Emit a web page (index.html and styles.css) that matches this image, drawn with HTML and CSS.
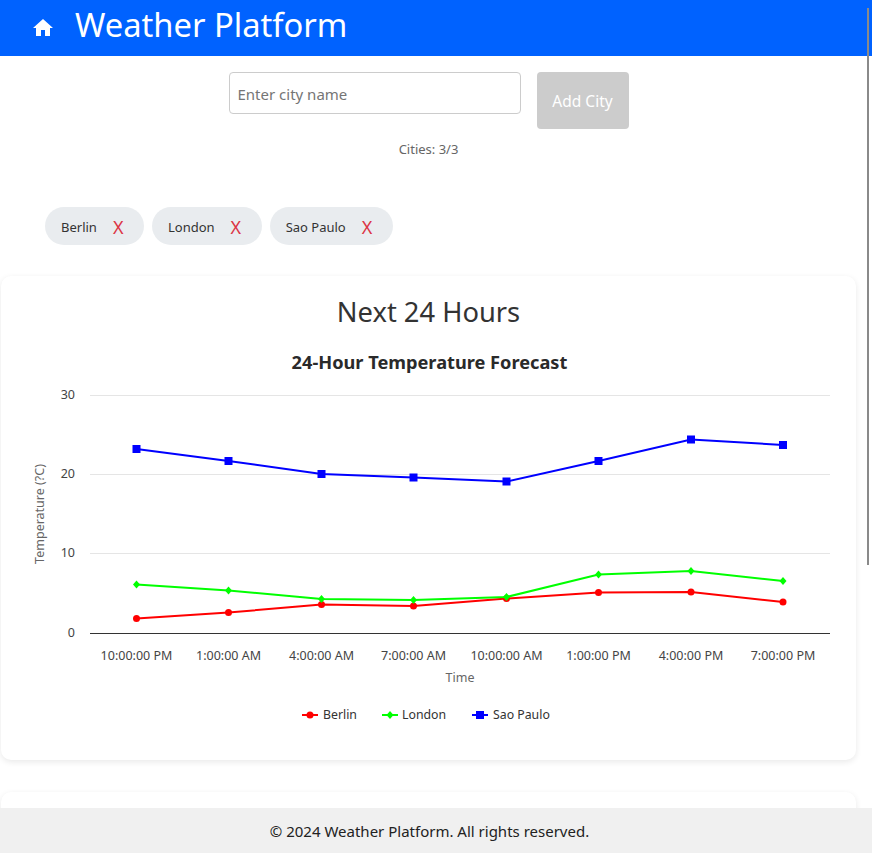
FILE: index.html
```html
<!DOCTYPE html>
<html lang="en">
<head>
  <meta charset="UTF-8" />
  <meta name="viewport" content="width=device-width, initial-scale=1.0" />
  <title>Weather Platform</title>
  <link rel="stylesheet" href="styles.css">
</head>
<body>
<header class="topbar">
  <svg class="home-icon" viewBox="0 0 24 24" aria-hidden="true"><path d="M10 20v-6h4v6h5v-8h3L12 3 2 12h3v8z"/></svg>
  <h1>Weather Platform</h1>
</header>

<main>
  <div class="search">
    <div class="search-row">
      <input type="text" placeholder="Enter city name" />
      <button disabled>Add City</button>
    </div>
    <p class="count">Cities: 3/3</p>
  </div>

  <div class="chips">
    <div class="chip"><span>Berlin</span><button>X</button></div>
    <div class="chip"><span>London</span><button>X</button></div>
    <div class="chip"><span>Sao Paulo</span><button>X</button></div>
  </div>

  <section class="card">
    <h2>Next 24 Hours</h2>
    <svg class="chart" viewBox="0 0 855 430" width="855" height="430">
      <text class="chart-title" x="427.5" y="77" text-anchor="middle">24-Hour Temperature Forecast</text>

      <line class="grid" x1="88" y1="103.5" x2="828" y2="103.5"/>
      <line class="grid" x1="88" y1="182.5" x2="828" y2="182.5"/>
      <line class="grid" x1="88" y1="261.5" x2="828" y2="261.5"/>
      <line class="axis" x1="88" y1="341.5" x2="828" y2="341.5"/>

      <text class="tick" x="73" y="107" text-anchor="end">30</text>
      <text class="tick" x="73" y="186" text-anchor="end">20</text>
      <text class="tick" x="73" y="265" text-anchor="end">10</text>
      <text class="tick" x="73" y="345" text-anchor="end">0</text>

      <text class="axis-label" transform="translate(42 222) rotate(-90)" text-anchor="middle">Temperature (?C)</text>

      <g class="tick" text-anchor="middle">
        <text x="134.500" y="367.500">10:00:00 PM</text>
        <text x="226.500" y="367.500">1:00:00 AM</text>
        <text x="319.500" y="367.500">4:00:00 AM</text>
        <text x="411.500" y="367.500">7:00:00 AM</text>
        <text x="504.500" y="367.500">10:00:00 AM</text>
        <text x="596.500" y="367.500">1:00:00 PM</text>
        <text x="689" y="367.500">4:00:00 PM</text>
        <text x="781" y="367.500">7:00:00 PM</text>
      </g>
      <text class="axis-label" x="458" y="390" text-anchor="middle">Time</text>

      <polyline class="line red" points="134.500,326.500 226.500,320.500 319.500,312.500 411.500,314 504.500,306.500 596.500,300.500 689,300 781,310"/>
      <g class="red-dots">
        <circle cx="134.500" cy="326.500" r="3.500"/><circle cx="226.500" cy="320.500" r="3.500"/>
        <circle cx="319.500" cy="312.500" r="3.500"/><circle cx="411.500" cy="314" r="3.500"/>
        <circle cx="504.500" cy="306.500" r="3.500"/><circle cx="596.500" cy="300.500" r="3.500"/>
        <circle cx="689" cy="300" r="3.500"/><circle cx="781" cy="310" r="3.500"/>
      </g>

      <polyline class="line green" points="134.500,292.500 226.500,298.500 319.500,307 411.500,308 504.500,305 596.500,282.500 689,279 781,289"/>
      <g class="green-dots">
        <path d="M134.500 288.500l3.500 4-3.500 4-3.500-4z"/><path d="M226.500 294.500l3.500 4-3.500 4-3.500-4z"/>
        <path d="M319.500 303l3.500 4-3.500 4-3.500-4z"/><path d="M411.500 304l3.500 4-3.500 4-3.500-4z"/>
        <path d="M504.500 301l3.500 4-3.500 4-3.500-4z"/><path d="M596.500 278.500l3.500 4-3.500 4-3.500-4z"/>
        <path d="M689 275l3.500 4-3.500 4-3.500-4z"/><path d="M781 285l3.500 4-3.500 4-3.500-4z"/>
      </g>

      <polyline class="line blue" points="134.500,157 226.500,169 319.500,182 411.500,185.500 504.500,189.500 596.500,169 689,147.500 781,153"/>
      <g class="blue-dots">
        <rect x="130.500" y="153" width="8" height="8"/><rect x="222.500" y="165" width="8" height="8"/>
        <rect x="315.500" y="178" width="8" height="8"/><rect x="407.500" y="181.500" width="8" height="8"/>
        <rect x="500.500" y="185.500" width="8" height="8"/><rect x="592.500" y="165" width="8" height="8"/>
        <rect x="685" y="143.500" width="8" height="8"/><rect x="777" y="149" width="8" height="8"/>
      </g>

      <line class="line red" x1="300" y1="423" x2="316" y2="423"/>
      <circle class="red-dots" cx="308" cy="423" r="3.500"/>
      <text class="legend" x="321" y="427">Berlin</text>

      <line class="line green" x1="380" y1="423" x2="396" y2="423"/>
      <path class="green-dots" d="M388 419l3.500 4-3.500 4-3.500-4z"/>
      <text class="legend" x="400" y="427">London</text>

      <line class="line blue" x1="470" y1="423" x2="486" y2="423"/>
      <rect class="blue-dots" x="474" y="419" width="8" height="8"/>
      <text class="legend" x="491" y="427">Sao Paulo</text>
    </svg>
  </section>

  <section class="card card-next"></section>
</main>

<footer class="bottombar">© 2024 Weather Platform. All rights reserved.</footer>
<div class="scroll-thumb"></div>
</body>
</html>
```

FILE: styles.css
```css
html, body { height: 100%; overflow: hidden; }
body { margin: 0; font-family: "Noto Sans", "Open Sans", sans-serif; background: white; color: #333; }

.topbar { display: flex; align-items: center; height: 56px; background: #0062ff; color: white; padding-left: 31px; box-sizing: border-box; }
.home-icon { width: 24px; height: 24px; fill: white; }
.topbar h1 { margin: 0 0 6px 20px; font-size: 32.7px; font-weight: 400; line-height: 1.2; }

main { width: 857px; }

.search { display: flex; flex-direction: column; align-items: center; padding-top: 16px; }
.search-row { display: flex; align-items: flex-start; gap: 16px; }
.search input { width: 292px; height: 42px; box-sizing: border-box; padding: 2px 8px 0; border: 1px solid #ccc; border-radius: 4px; font: inherit; font-size: 15px; }
.search input::placeholder { color: #757575; }
.search button { width: 92px; height: 57px; background: #ccc; color: white; border: none; border-radius: 4px; font: inherit; font-size: 15.5px; }
.count { margin: 11px 0 0; font-size: 13px; line-height: 18px; color: #666; }

.chips { display: flex; gap: 8px; padding: 49px 0 0 45px; }
.chip { display: flex; align-items: center; height: 38px; box-sizing: border-box; padding: 2px 20.5px 0 16px; background: #e9ecef; border-radius: 19px; font-size: 13px; }
.chip button { margin-left: 16px; padding: 0; background: none; border: none; color: #dc3545; font: inherit; font-size: 18px; }

.card { width: 855px; height: 484px; margin: 31px 0 0 1px; background: white; border-radius: 10px; box-shadow: 0 2px 6px rgba(0,0,0,0.09); }
.card h2 { margin: 0; padding-top: 16px; font-size: 27.3px; font-weight: 400; line-height: 40px; text-align: center; }
.chart { display: block; margin: -40px 0 0 1px; }
.card-next { height: 61px; margin-top: 32px; }

.chart-title { font-size: 18.2px; font-weight: 700; fill: #2a2a2a; }
.tick { font-size: 12.5px; fill: #444; }
.axis-label { font-size: 12.5px; fill: #666; }
.legend { font-size: 12.3px; fill: #333; }
.grid { stroke: #e5e5e5; stroke-width: 1; }
.axis { stroke: #333; stroke-width: 1; }
.line { fill: none; stroke-width: 2; }
.red { stroke: #ff0000; }
.green { stroke: #00ff00; }
.blue { stroke: #0000ff; }
.red-dots { fill: #ff0000; }
.green-dots { fill: #00ff00; }
.blue-dots { fill: #0000ff; }

.bottombar { position: fixed; left: 0; right: 0; bottom: 0; height: 45px; padding-right: 13px; line-height: 47px; background: #f0f0f0; text-align: center; font-size: 15px; color: #222; }
.scroll-thumb { position: fixed; top: 8px; right: 3px; width: 2px; height: 557px; background: #8a8a8a; }
```
